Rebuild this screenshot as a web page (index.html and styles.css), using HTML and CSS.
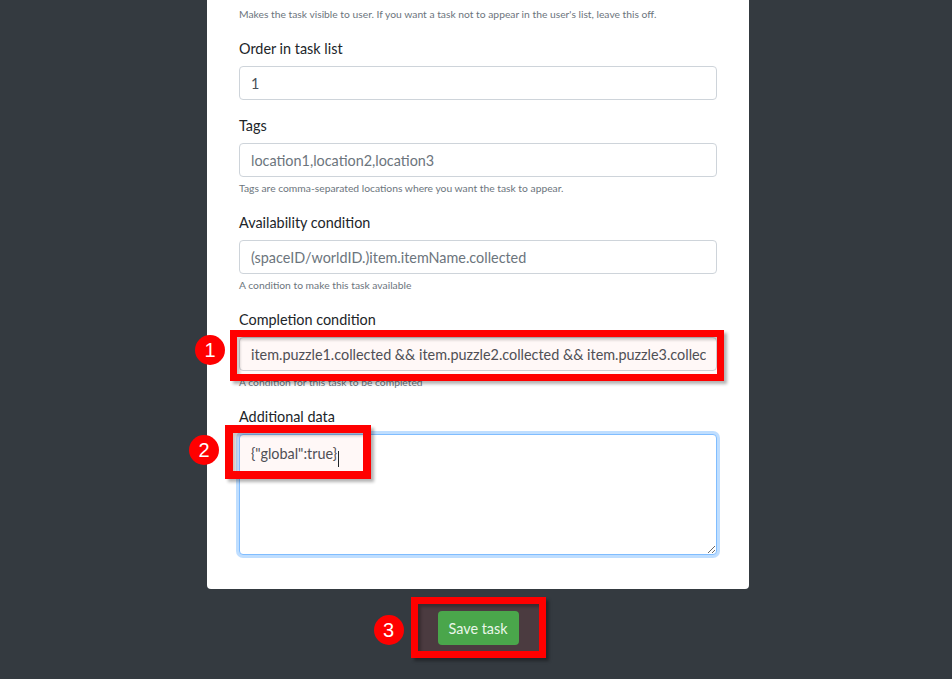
FILE: index.html
```html
<!DOCTYPE html>
<html lang="en">
<head>
    <meta charset="UTF-8">
    <meta name="viewport" content="width=device-width, initial-scale=1.0">
    <title>Edit task</title>
    <link rel="stylesheet" href="styles.css">
</head>
<body>

    <div class="page">
        <form class="card">
            <div class="group">
                <small class="help">Makes the task visible to user. If you want a task not to appear in the user's list, leave this off.</small>
            </div>

            <div class="group">
                <label>Order in task list</label>
                <input class="field" type="text" value="1">
            </div>

            <div class="group">
                <label>Tags</label>
                <input class="field" type="text" placeholder="location1,location2,location3">
                <small class="help">Tags are comma-separated locations where you want the task to appear.</small>
            </div>

            <div class="group">
                <label>Availability condition</label>
                <input class="field" type="text" placeholder="(spaceID/worldID.)item.itemName.collected">
                <small class="help">A condition to make this task available</small>
            </div>

            <div class="group">
                <label>Completion condition</label>
                <div class="marked">
                    <input class="field" type="text" value="item.puzzle1.collected && item.puzzle2.collected && item.puzzle3.collected">
                    <div class="callout callout-one">
                        <span class="badge">1</span>
                    </div>
                </div>
                <small class="help">A condition for this task to be completed</small>
            </div>

            <div class="group">
                <label>Additional data</label>
                <div class="marked">
                    <textarea class="field area">{"global":true}</textarea>
                    <div class="callout callout-two">
                        <span class="badge">2</span>
                        <span class="caret"></span>
                    </div>
                </div>
            </div>
        </form>

        <div class="save-box">
            <span class="badge">3</span>
            <button type="button" class="btn-save">Save task</button>
        </div>
    </div>

</body>
</html>
```

FILE: styles.css
```css
body {
    margin: 0;
    background-color: #343a40;
    font-family: Lato, "Open Sans", Arial, sans-serif;
    font-size: 14.4px;
    color: #212529;
}
.page {
    display: flex;
    flex-direction: column;
    align-items: center;
    padding-left: 4px;
    height: 679px;
    overflow: hidden;
}
.card {
    width: 542px;
    box-sizing: border-box;
    background: white;
    padding: 6px 32px 19px;
    border-radius: 0 0 4px 4px;
}
.group {
    margin-bottom: 15px;
}
label {
    display: block;
    line-height: 21px;
    margin-bottom: 7px;
}
.help {
    display: block;
    font-size: 10.3px;
    line-height: 17px;
    color: #6c757d;
    margin-top: 3px;
}
.group:first-child .help {
    margin-top: 0;
}
.field {
    display: block;
    width: 100%;
    height: 34px;
    box-sizing: border-box;
    padding: 0 10.5px 0 11px;
    border: 1px solid #ced4da;
    border-radius: 4px;
    font-family: inherit;
    font-size: 14.4px;
    color: #495057;
    background: white;
    outline: none;
}
.field::placeholder {
    color: #6c757d;
}
.area {
    height: 121px;
    padding-top: 8px;
    line-height: 21px;
    resize: vertical;
    border-color: #80bdff;
    box-shadow: 0 0 0 3px rgba(0, 123, 255, 0.25);
}

/* screenshot annotations */
.marked {
    position: relative;
}
.callout {
    position: absolute;
    border: 7px solid #ff0000;
    background: rgba(255, 80, 60, 0.04);
    box-shadow: 3px 3px 3px rgba(0, 0, 0, 0.3), inset 3px 3px 3px rgba(0, 0, 0, 0.2);
}
.callout-one {
    left: -9px;
    top: -7px;
    width: 494px;
    height: 51px;
    box-sizing: border-box;
}
.callout-two {
    left: -14px;
    top: -9px;
    width: 146px;
    height: 54px;
    box-sizing: border-box;
    border-width: 8px;
}
.badge {
    position: absolute;
    width: 30px;
    height: 30px;
    border-radius: 50%;
    background: #ff0000;
    color: white;
    font-family: "Liberation Sans", Arial, sans-serif;
    font-size: 20px;
    line-height: 30px;
    text-align: center;
}
.callout-one .badge {
    left: -42px;
    top: -2px;
}
.callout-two .badge {
    left: -44px;
    top: 2px;
}
.caret {
    position: absolute;
    left: 105px;
    top: 18px;
    width: 1px;
    height: 16px;
    background: #212529;
}
.save-box {
    position: relative;
    margin-top: 8px;
    padding: 7px 20px 6px;
    border: 7px solid #ff0000;
    background: #4b3b40;
    box-shadow: 3px 3px 3px rgba(0, 0, 0, 0.35), inset 3px 3px 3px rgba(0, 0, 0, 0.25);
}
.save-box .badge {
    left: -44px;
    top: 11px;
}
.btn-save {
    display: block;
    height: 34px;
    width: 81px;
    padding: 0;
    border: none;
    border-radius: 4px;
    background: #4aa64b;
    color: #eaf6ea;
    font-family: inherit;
    font-size: 14.4px;
}
```
